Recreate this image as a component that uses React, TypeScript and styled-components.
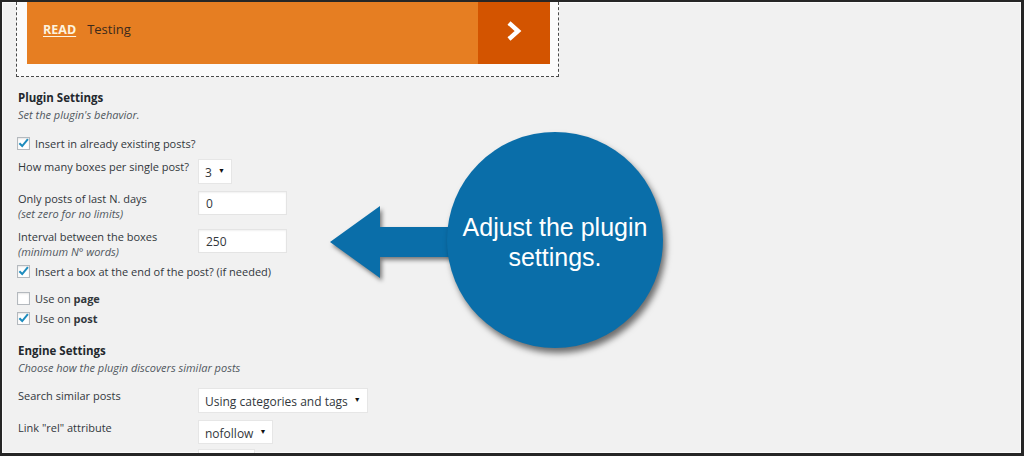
import React from 'react';
import styled, { createGlobalStyle } from 'styled-components';

const GlobalStyle = createGlobalStyle`
  html, body {
    margin: 0;
    padding: 0;
    background: #f1f1f1;
  }
  * {
    box-sizing: border-box;
  }
`;

const Frame = styled.div`
  position: relative;
  width: 1024px;
  height: 456px;
  overflow: hidden;
  background: #f1f1f1;
  border-style: solid;
  border-color: #262626;
  border-width: 2px 3px 3px 2px;
  box-shadow: inset 0 0 0 1px #fbfbfb;
  padding-left: 14px;
  font-family: 'Open Sans', 'Noto Sans', sans-serif;
  font-size: 11px;
  color: #32373c;
`;

const PreviewBox = styled.div`
  width: 543px;
  height: 75px;
  border: 1px dashed #4a4a4a;
  border-top: none;
  background: #fbfbfb;
  padding: 0 8px 0 10px;
`;

const Banner = styled.div`
  display: flex;
  height: 62px;
`;

const BannerBody = styled.div`
  flex: 1;
  display: flex;
  align-items: center;
  gap: 11px;
  padding: 0 0 8px 16px;
  background: #e67e22;
  font-size: 13px;
`;

const ReadLink = styled.span`
  font-weight: 700;
  font-size: 12.5px;
  color: #fdf3df;
  text-decoration: underline;
  text-underline-offset: 2px;
`;

const BannerTitle = styled.span`
  color: #3b2a1d;
`;

const BannerArrow = styled.div`
  width: 72px;
  display: flex;
  align-items: center;
  justify-content: center;
  padding-bottom: 4px;
  background: #d35400;
`;

const Section = styled.div<{ $top: number }>`
  margin-top: ${p => p.$top}px;
  padding-left: 2px;
`;

const Title = styled.div`
  font-weight: 700;
  font-size: 11.5px;
  line-height: 17px;
  color: #23282d;
`;

const Desc = styled.div`
  font-style: italic;
  line-height: 17px;
  color: #50575e;
`;

const Row = styled.div<{ $top: number }>`
  display: grid;
  grid-template-columns: 180px auto;
  align-items: start;
  margin-top: ${p => p.$top}px;
  padding-left: 2px;
`;

const Label = styled.div`
  line-height: 15px;
  min-height: 15px;
`;

const Hint = styled.div`
  font-style: italic;
  line-height: 15px;
  color: #50575e;
`;

const CheckRow = styled.label<{ $top: number }>`
  display: flex;
  align-items: center;
  gap: 5px;
  height: 20px;
  margin-top: ${p => p.$top}px;
  padding-left: 1px;
`;

const Box = styled.span`
  display: inline-flex;
  align-items: center;
  justify-content: center;
  width: 13px;
  height: 13px;
  background: #fff;
  border: 1px solid #b4b9be;
  box-shadow: inset 0 1px 2px rgba(0, 0, 0, 0.1);
`;

const TextInput = styled.div<{ $w: number }>`
  width: ${p => p.$w}px;
  height: 24px;
  display: flex;
  align-items: center;
  padding-left: 7px;
  background: #fff;
  border: 1px solid #e4e4e4;
  box-shadow: inset 0 1px 2px rgba(0, 0, 0, 0.06);
  font-size: 12px;
  color: #32373c;
`;

const SelectBox = styled.div<{ $h?: number; $w?: number }>`
  display: inline-flex;
  align-items: center;
  gap: 6px;
  height: ${p => p.$h || 25}px;
  ${p => (p.$w ? `width: ${p.$w}px;` : '')}
  padding: 2px 6px 0 6px;
  background: #fff;
  border: 1px solid #e6e6e6;
  font-size: 12px;
  color: #32373c;
  justify-self: start;
`;

const Caret = styled.span`
  font-size: 7px;
  color: #111;
  margin-top: -4px;
`;

const Callout = styled.div`
  position: absolute;
  left: 445px;
  top: 130px;
  width: 216px;
  height: 216px;
  border-radius: 50%;
  background: #0a6ea9;
  box-shadow: 3px 5px 6px rgba(0, 0, 0, 0.55);
  display: flex;
  align-items: center;
  justify-content: center;
  padding-top: 4px;
  text-align: center;
  font-family: 'Liberation Sans', Arial, sans-serif;
  font-size: 25px;
  line-height: 30px;
  color: #fff;
`;

const ArrowSvg = styled.svg`
  position: absolute;
  left: 318px;
  top: 192px;
  filter: drop-shadow(2px 3px 2px rgba(0, 0, 0, 0.5));
`;

const Check = ({ on }: { on: boolean }) => (
  <Box>
    {on && (
      <svg width="12" height="12" viewBox="0 0 12 12">
        <path d="M1.5 6.2 L4.6 9.3 L10.8 1.8" fill="none" stroke="#1e8cbe" strokeWidth="2.2" />
      </svg>
    )}
  </Box>
);

const Select = ({ value, h }: { value: string; h?: number }) => (
  <SelectBox $h={h}>
    {value}
    <Caret>▼</Caret>
  </SelectBox>
);

export default function App() {
  return (
    <>
      <GlobalStyle />
      <Frame>
        <PreviewBox>
          <Banner>
            <BannerBody>
              <ReadLink>READ</ReadLink>
              <BannerTitle>Testing</BannerTitle>
            </BannerBody>
            <BannerArrow>
              <svg width="16" height="20" viewBox="0 0 16 20">
                <path d="M3 2 L12 10 L3 18" fill="none" stroke="#fff" strokeWidth="4.5" strokeLinejoin="miter" />
              </svg>
            </BannerArrow>
          </Banner>
        </PreviewBox>

        <Section $top={12}>
          <Title>Plugin Settings</Title>
          <Desc>Set the plugin's behavior.</Desc>
        </Section>

        <CheckRow $top={10}>
          <Check on />
          Insert in already existing posts?
        </CheckRow>

        <Row $top={6}>
          <Label>How many boxes per single post?</Label>
          <Select value="3" />
        </Row>

        <Row $top={7}>
          <div>
            <Label>Only posts of last N. days</Label>
            <Hint>(set zero for no limits)</Hint>
          </div>
          <TextInput $w={89}>0</TextInput>
        </Row>

        <Row $top={8}>
          <div>
            <Label>Interval between the boxes</Label>
            <Hint>(minimum N° words)</Hint>
          </div>
          <TextInput $w={89}>250</TextInput>
        </Row>

        <CheckRow $top={2}>
          <Check on />
          Insert a box at the end of the post? (if needed)
        </CheckRow>

        <CheckRow $top={7}>
          <Check on={false} />
          <span>
            Use on <b>page</b>
          </span>
        </CheckRow>

        <CheckRow $top={0}>
          <Check on />
          <span>
            Use on <b>post</b>
          </span>
        </CheckRow>

        <Section $top={14}>
          <Title>Engine Settings</Title>
          <Desc>Choose how the plugin discovers similar posts</Desc>
        </Section>

        <Row $top={12}>
          <Label>Search similar posts</Label>
          <Select value="Using categories and tags" />
        </Row>

        <Row $top={7}>
          <Label>Link "rel" attribute</Label>
          <Select value="nofollow" h={24} />
        </Row>

        <Row $top={5}>
          <Label />
          <SelectBox $w={57} />
        </Row>

        <ArrowSvg width="150" height="96" viewBox="0 0 150 96">
          <polygon points="10,48 60,12 60,33 145,33 145,63 60,63 60,84" fill="#0a6ea9" />
        </ArrowSvg>

        <Callout>
          Adjust the plugin
          <br />
          settings.
        </Callout>
      </Frame>
    </>
  );
}
